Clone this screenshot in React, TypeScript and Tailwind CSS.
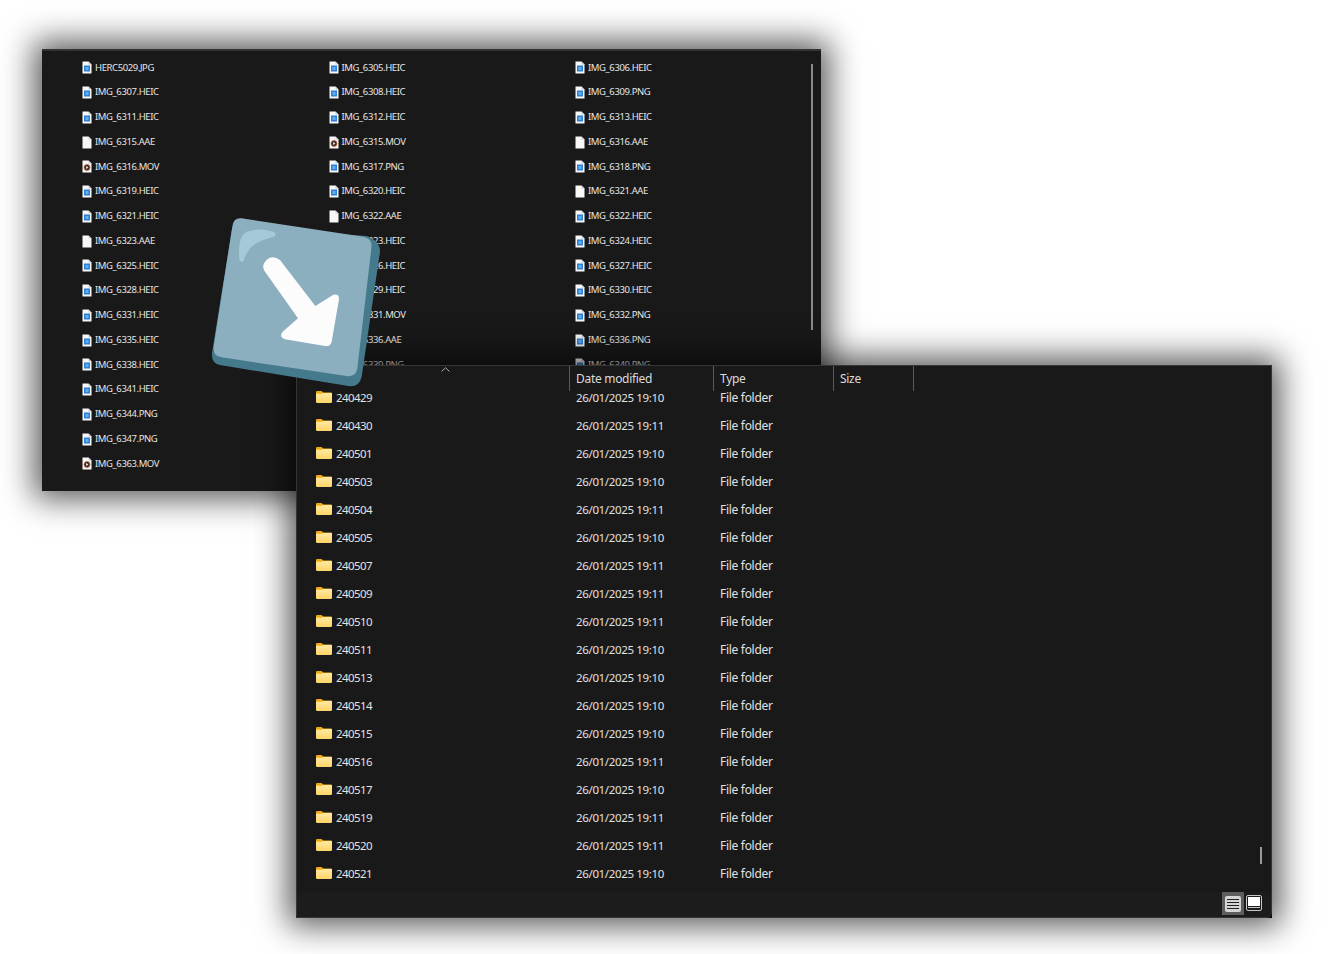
const fileColumns = [
  ['HERC5029.JPG', 'IMG_6307.HEIC', 'IMG_6311.HEIC', 'IMG_6315.AAE', 'IMG_6316.MOV', 'IMG_6319.HEIC', 'IMG_6321.HEIC', 'IMG_6323.AAE', 'IMG_6325.HEIC', 'IMG_6328.HEIC', 'IMG_6331.HEIC', 'IMG_6335.HEIC', 'IMG_6338.HEIC', 'IMG_6341.HEIC', 'IMG_6344.PNG', 'IMG_6347.PNG', 'IMG_6363.MOV'],
  ['IMG_6305.HEIC', 'IMG_6308.HEIC', 'IMG_6312.HEIC', 'IMG_6315.MOV', 'IMG_6317.PNG', 'IMG_6320.HEIC', 'IMG_6322.AAE', 'IMG_6323.HEIC', 'IMG_6326.HEIC', 'IMG_6329.HEIC', 'IMG_6331.MOV', 'IMG_6336.AAE', 'IMG_6339.PNG'],
  ['IMG_6306.HEIC', 'IMG_6309.PNG', 'IMG_6313.HEIC', 'IMG_6316.AAE', 'IMG_6318.PNG', 'IMG_6321.AAE', 'IMG_6322.HEIC', 'IMG_6324.HEIC', 'IMG_6327.HEIC', 'IMG_6330.HEIC', 'IMG_6332.PNG', 'IMG_6336.PNG', 'IMG_6340.PNG'],
]

const folders: [string, string][] = [
  ['240429', '19:10'], ['240430', '19:11'], ['240501', '19:10'], ['240503', '19:10'], ['240504', '19:11'], ['240505', '19:10'],
  ['240507', '19:11'], ['240509', '19:11'], ['240510', '19:11'], ['240511', '19:10'], ['240513', '19:10'], ['240514', '19:10'],
  ['240515', '19:10'], ['240516', '19:11'], ['240517', '19:10'], ['240519', '19:11'], ['240520', '19:11'], ['240521', '19:10'],
]

function FileIcon({ name }: { name: string }) {
  const kind = name.split('.')[1]
  return (
    <svg width="10" height="13" viewBox="0 0 10 13" className="shrink-0">
      <path d="M0.5 0.5H6.5L9.5 3.5V12.5H0.5Z" fill="#f7f7f7" />
      <path d="M6.5 0.5V3.5H9.5Z" fill="#c9ced2" />
      {kind === 'MOV' && (
        <>
          <circle cx="5" cy="7.5" r="3" fill="#2e2e33" stroke="#d9622e" strokeWidth="0.8" />
          <path d="M4.2 6.1L6.4 7.5L4.2 8.9Z" fill="#f2f2f2" />
        </>
      )}
      {kind !== 'MOV' && kind !== 'AAE' && (
        <>
          <rect x="2" y="4.5" width="6" height="6" fill="#2f7fd6" />
          <rect x="3.5" y="6" width="3" height="3" fill="#5fb0ee" />
        </>
      )}
    </svg>
  )
}

function FolderIcon() {
  return (
    <svg width="16" height="12" viewBox="0 0 16 12" className="mb-[2px] shrink-0">
      <defs>
        <linearGradient id="folderBody" x1="0" y1="0" x2="0" y2="1">
          <stop offset="0" stopColor="#ffeaa3" />
          <stop offset="1" stopColor="#fdd468" />
        </linearGradient>
      </defs>
      <path d="M0 1.2Q0 0 1.2 0H5.5L7.2 1.6H14.8Q16 1.6 16 2.8V4H0Z" fill="#f2ab12" />
      <path d="M0 2.8H5.5L7.2 2H16V10.8Q16 12 14.8 12H1.2Q0 12 0 10.8Z" fill="url(#folderBody)" />
    </svg>
  )
}

function KeyLogo() {
  return (
    <svg width="240" height="220" viewBox="0 0 720 660" className="absolute left-[200px] top-[200px]">
      <path d="M500 108Q540 122 540 155L485 530Q478 562 445 558L60 495Q34 490 36 460L97 80Z" fill="#457a8d" />
      <path d="M125 55L490 110Q518 115 514 145L472 505Q468 532 440 528L65 472Q38 468 41 440L97 80Q100 52 125 55Z" fill="#8cafc0" />
      <path d="M118 180Q112 110 140 95Q180 82 222 96Q232 104 222 110Q170 122 150 145Q135 165 132 180Q125 192 118 180Z" fill="#a4c9d8" />
      <path d="M195 185Q215 162 240 180L346 318L400 284Q418 280 417 298L395 425Q392 440 375 438L255 418Q235 410 248 395L294 355L193 212Q185 198 195 185Z" fill="#fcfcfc" />
    </svg>
  )
}

function BackWindow() {
  return (
    <div className="absolute left-[42px] top-[49px] h-[442px] w-[779px] overflow-hidden border-t-2 border-[#333333] bg-[#191919] shadow-[0_0_30px_8px_rgba(0,0,0,0.65)]">
      <div className="grid grid-cols-[246.5px_246.5px_246.5px] pl-[40px] pt-[4.4px]">
        {fileColumns.map((col) => (
          <div key={col[0]} className="flex flex-col">
            {col.map((name) => (
              <div key={name} className="flex h-[24.75px] items-center gap-[3px] text-[9.5px] tracking-[-0.4px] text-[#e6e6e6]">
                <FileIcon name={name} />
                <span>{name}</span>
              </div>
            ))}
          </div>
        ))}
      </div>
      <div className="absolute right-[8px] top-[13px] h-[266px] w-[2px] bg-[#8a8a8a]" />
    </div>
  )
}

function FrontWindow() {
  const headers = [
    { label: '', width: 'w-[273px]' },
    { label: 'Date modified', width: 'w-[144px]' },
    { label: 'Type', width: 'w-[120px]' },
    { label: 'Size', width: 'w-[80px]' },
  ]
  return (
    <div className="absolute left-[296px] top-[365px] h-[553px] w-[976px] bg-[#0c0c0c] shadow-[0_0_30px_8px_rgba(0,0,0,0.65)]">
      <div className="relative flex h-full flex-col rounded-br-[6px] border border-[#363636] bg-[#191919]">
        <div className="relative flex h-[25px] shrink-0">
          {headers.map((h) => (
            <div key={h.width} className={`${h.width} flex h-full items-end border-r border-[#5a5a5a] pb-[4px] pl-[6px] text-[12px] leading-[16px] tracking-[-0.3px] text-[#dcdcdc]`}>
              {h.label}
            </div>
          ))}
          <svg width="9" height="5" viewBox="0 0 9 5" className="absolute left-[144px] top-[1px]">
            <path d="M0.5 4.5L4.5 0.8L8.5 4.5" fill="none" stroke="#b0b0b0" />
          </svg>
        </div>
        <div className="-mt-[7px] flex flex-1 flex-col">
          {folders.map(([name, time]) => (
            <div key={name} className="flex h-[28px] shrink-0 items-center text-[#e2e2e2]">
              <div className="flex w-[273px] items-center gap-[4px] pl-[19px] text-[11.5px] tracking-[-0.6px]">
                <FolderIcon />
                <span>{name}</span>
              </div>
              <div className="w-[144px] pl-[6px] text-[11.5px] tracking-[-0.35px]">26/01/2025 {time}</div>
              <div className="pl-[6px] text-[12px] tracking-[-0.3px]">File folder</div>
            </div>
          ))}
        </div>
        <div className="flex h-[25px] shrink-0 items-start justify-end gap-[2px] rounded-br-[6px] bg-[#1c1c1c] pr-[9px]">
          <div className="flex h-[23px] w-[22px] items-center justify-center bg-[#5e5e5e]">
            <div className="flex h-[16px] w-[16px] flex-col justify-center gap-[2px] rounded-[2px] bg-[#d4d4d4] px-[2px]">
              <div className="h-px bg-[#222222]" />
              <div className="h-px bg-[#222222]" />
              <div className="h-px bg-[#222222]" />
              <div className="h-px bg-[#222222]" />
            </div>
          </div>
          <div className="flex h-[22px] w-[16px] items-center">
            <div className="flex h-[16px] w-[16px] flex-col gap-px rounded-[2px] border border-[#c8c8c8] bg-[#1c1c1c] p-px">
              <div className="h-[9px] bg-white" />
              <div className="h-px bg-[#c8c8c8]" />
            </div>
          </div>
        </div>
        <div className="absolute left-[963px] top-[481px] h-[17px] w-[2px] bg-[#9a9a9a]" />
      </div>
    </div>
  )
}

export default function App() {
  return (
    <div className="relative h-[954px] w-[1338px] overflow-hidden bg-white font-['Noto_Sans','Liberation_Sans',sans-serif]">
      <BackWindow />
      <FrontWindow />
      <KeyLogo />
    </div>
  )
}
